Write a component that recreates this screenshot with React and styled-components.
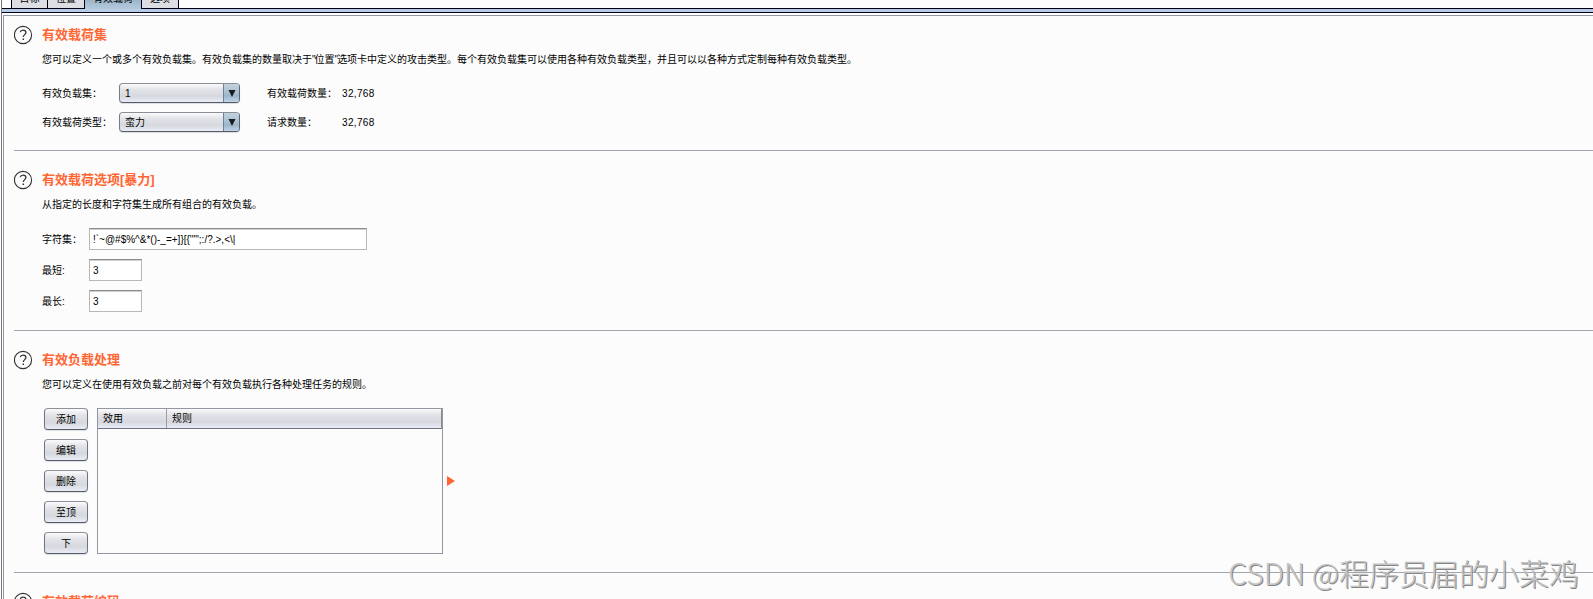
import React from 'react';
import styled, { createGlobalStyle, ThemeProvider } from 'styled-components';

const theme = {
    accent: '#ff6633',
    background: '#fcfcfc',
    line: '#9297a1',
    darkLine: '#000019',
    button: 'linear-gradient(#fbfbfc 0%, #e3e4e8 30%, #d6d8df 68%, #e9edf5 100%)',
    buttonActive: 'linear-gradient(#c3d2df 0%, #a9bfd1 50%, #9db5c9 65%, #bdd3e8 100%)',
    font: '"Liberation Sans", "Noto Sans CJK SC", sans-serif',
};

const GlobalStyle = createGlobalStyle`
    * {
        box-sizing: border-box;
    }

    body {
        margin: 0;
        overflow: hidden;
    }
`;

const Window = styled.div`
    position: relative;
    height: 599px;
    overflow: hidden;
    padding-left: 1px;
    background: #fff;
    font-family: ${({ theme }) => theme.font};
    font-size: 10px;
    line-height: 14px;
    color: #000;
`;

const Frame = styled.div`
    height: 100%;
    border-left: 1px solid #77737a;
`;

const TabBar = styled.div`
    display: flex;
    height: 13px;
    padding-left: 9px;
    background: linear-gradient(${({ theme }) => `${theme.background} 8px, ${theme.darkLine} 8px, ${theme.darkLine} 9px, #b8cce4 9px, #b8cce4 12px, ${theme.darkLine} 12px`});
`;

const Tab = styled.div`
    display: flex;
    align-items: flex-end;
    justify-content: center;
    width: ${({ $width }) => $width}px;
    height: ${({ $active }) => ($active ? 9 : 8)}px;
    border-left: 1px solid ${({ theme }) => theme.darkLine};
    background: ${({ $active }) => ($active ? 'linear-gradient(#9db5c9, #b3c9df)' : '#dcdee3')};

    &:last-child {
        border-right: 1px solid ${({ theme }) => theme.darkLine};
    }
`;

const TabLabel = styled.span`
    margin-bottom: ${({ $active }) => ($active ? 3 : 2)}px;
`;

const Panel = styled.div`
    height: 584px;
    margin: 2px 0 0 1px;
    padding-left: 10px;
    border: solid ${({ theme }) => theme.line};
    border-width: 1px 0 0 1px;
    background: ${({ theme }) => theme.background};
`;

const Section = styled.section`
    height: ${({ $height }) => $height}px;
    padding-top: ${({ $top }) => $top || 19}px;
    border-bottom: 1px solid #a1a5ae;
`;

const SectionHead = styled.header`
    display: flex;
    align-items: center;
    gap: 9px;
    height: 20px;
`;

const Title = styled.h2`
    margin: 0;
    font-size: 13px;
    font-weight: 700;
    line-height: 20px;
    color: ${({ theme }) => theme.accent};
`;

const Description = styled.p`
    margin: 8px 0 0 28px;
    white-space: nowrap;
`;

const Quote = styled.span`
    letter-spacing: -1px;
`;

const Row = styled.div`
    display: flex;
    align-items: center;
    height: ${({ $height }) => $height}px;
    margin-left: 28px;
`;

const Rows = styled.div`
    display: flex;
    flex-direction: column;
    gap: 9px;
    margin-top: ${({ $top }) => $top}px;
`;

const Label = styled.span`
    width: ${({ $width }) => $width}px;
    padding-top: 2px;
    white-space: nowrap;
`;

const Count = styled(Label)`
    letter-spacing: 0.35px;
`;

const Select = styled.div`
    display: flex;
    width: 121px;
    height: 20px;
    margin-right: 27px;
    overflow: hidden;
    border: 1px solid;
    border-color: #8b8e96 #5d646e #565b66 #777b84;
    border-radius: 4px;
    background: ${({ theme }) => theme.button};
    box-shadow: 0 1px 1px #d9dbe0;
    line-height: 20px;
`;

const SelectValue = styled.span`
    flex: 1;
    padding-left: 5px;
`;

const SelectArrow = styled.span`
    display: flex;
    align-items: center;
    justify-content: center;
    width: 16px;
    border-left: 1px solid #6b8299;
    background: ${({ theme }) => theme.buttonActive};
`;

const Input = styled.div`
    width: ${({ $width }) => $width}px;
    height: 22px;
    padding-left: 3px;
    border: 1px solid #b8b8b8;
    border-top-color: #8c8c8c;
    background: #fff;
    box-shadow: inset 0 1px 0 #d0d0d0;
    line-height: 22px;
    white-space: nowrap;
`;

const Processing = styled.div`
    display: flex;
    margin: 16px 0 0 30px;
`;

const Buttons = styled.div`
    display: flex;
    flex-direction: column;
    gap: 9px;
    width: 53px;
`;

const Button = styled.button`
    width: 44px;
    height: 22px;
    padding: 2px 0 0;
    border: 1px solid;
    border-color: #8e9198 #70747e #555a66 #70747e;
    border-radius: 4px;
    background: ${({ theme }) => theme.button};
    box-shadow: 0 1px 1px #dcdde2;
    font: inherit;
    color: #000;
`;

const Table = styled.div`
    width: 346px;
    height: 146px;
    border: 1px solid ${({ theme }) => theme.line};
`;

const TableHead = styled.div`
    display: flex;
    height: 20px;
    border-right: 1px solid #868a93;
    border-bottom: 1px solid #6f737e;
    background: ${({ theme }) => theme.button};
    line-height: 19px;
`;

const TableCell = styled.span`
    width: ${({ $width }) => $width}px;
    padding-left: 5px;
    border-right: ${({ $width }) => ($width ? '1px solid #9a9da5' : 'none')};
`;

const Marker = styled.svg`
    align-self: center;
    margin: 0 0 0 4px;
`;

const Watermark = styled.div`
    position: absolute;
    right: 14px;
    bottom: 5px;
    font-family: "Noto Sans CJK SC", sans-serif;
    font-size: 30px;
    font-weight: 300;
    line-height: 44px;
    color: #c4c4c4;
    text-shadow: 1px 1px 0 #858585;
    white-space: nowrap;
`;

const HelpIcon = () => (
    <svg width="19" height="20" viewBox="0 0 19 20" fill="none" stroke="#333">
        <circle cx="9" cy="10" r="8.6" strokeWidth="1.1" />
        <path d="M6.3 7.2C6.6 5.9 7.6 5.2 9.1 5.2c1.7 0 2.8.9 2.8 2.3 0 2.1-2.6 2.2-2.6 4.6" strokeWidth="1.3" />
        <path d="M9.3 13.5v1.5" strokeWidth="1.5" />
    </svg>
);

const Head = ({ title, children }) => (
    <>
        <SectionHead>
            <HelpIcon />
            <Title>{title}</Title>
        </SectionHead>
        {children && <Description>{children}</Description>}
    </>
);

const Dropdown = ({ value }) => (
    <Select>
        <SelectValue>{value}</SelectValue>
        <SelectArrow>
            <svg width="8" height="7" viewBox="0 0 8 7">
                <path d="M0.5 0h7L4 7z" fill="#171b22" />
            </svg>
        </SelectArrow>
    </Select>
);

const TABS = [
    { label: '目标', width: 36 },
    { label: '位置', width: 37 },
    { label: '有效载荷', width: 57, active: true },
    { label: '选项', width: 38 },
];

const SETS = [
    { label: '有效负载集：', value: '1', count: '有效载荷数量：' },
    { label: '有效载荷类型：', value: '蛮力', count: '请求数量：' },
];

const FIELDS = [
    { label: '字符集：', value: '!`~@#$%^&*()-_=+]}[{\'"";:/?.>,<\\|', width: 278 },
    { label: '最短:', value: '3', width: 53 },
    { label: '最长:', value: '3', width: 53 },
];

const ACTIONS = ['添加', '编辑', '删除', '至顶', '下'];

const App = () => (
    <ThemeProvider theme={theme}>
        <GlobalStyle />
        <Window>
            <Frame>
                <TabBar>
                    {TABS.map(({ label, width, active }) => (
                        <Tab key={label} $width={width} $active={active}>
                            <TabLabel $active={active}>{label}</TabLabel>
                        </Tab>
                    ))}
                </TabBar>
                <Panel>
                    <Section $height={135} $top={9}>
                        <Head title="有效载荷集">
                            您可以定义一个或多个有效负载集。有效负载集的数量取决于<Quote>"</Quote>位置<Quote>"</Quote>选项卡中定义的攻击类型。每个有效负载集可以使用各种有效负载类型，并且可以以各种方式定制每种有效负载类型。
                        </Head>
                        <Rows $top={16}>
                            {SETS.map(({ label, value, count }) => (
                                <Row key={label} $height={20}>
                                    <Label $width={77}>{label}</Label>
                                    <Dropdown value={value} />
                                    <Label $width={75}>{count}</Label>
                                    <Count>32,768</Count>
                                </Row>
                            ))}
                        </Rows>
                    </Section>
                    <Section $height={180}>
                        <Head title="有效载荷选项[暴力]">从指定的长度和字符集生成所有组合的有效负载。</Head>
                        <Rows $top={16}>
                            {FIELDS.map(({ label, value, width }) => (
                                <Row key={label} $height={22}>
                                    <Label $width={47}>{label}</Label>
                                    <Input $width={width}>{value}</Input>
                                </Row>
                            ))}
                        </Rows>
                    </Section>
                    <Section $height={242}>
                        <Head title="有效负载处理">您可以定义在使用有效负载之前对每个有效负载执行各种处理任务的规则。</Head>
                        <Processing>
                            <Buttons>
                                {ACTIONS.map((action) => (
                                    <Button key={action}>{action}</Button>
                                ))}
                            </Buttons>
                            <Table>
                                <TableHead>
                                    <TableCell $width={69}>效用</TableCell>
                                    <TableCell>规则</TableCell>
                                </TableHead>
                            </Table>
                            <Marker width="8" height="10" viewBox="0 0 8 10">
                                <path d="M0 0l8 5-8 5z" fill="#ff6633" />
                            </Marker>
                        </Processing>
                    </Section>
                    <Section $height={60}>
                        <Head title="有效载荷编码" />
                    </Section>
                </Panel>
            </Frame>
            <Watermark>CSDN @程序员届的小菜鸡</Watermark>
        </Window>
    </ThemeProvider>
);

export default App;
